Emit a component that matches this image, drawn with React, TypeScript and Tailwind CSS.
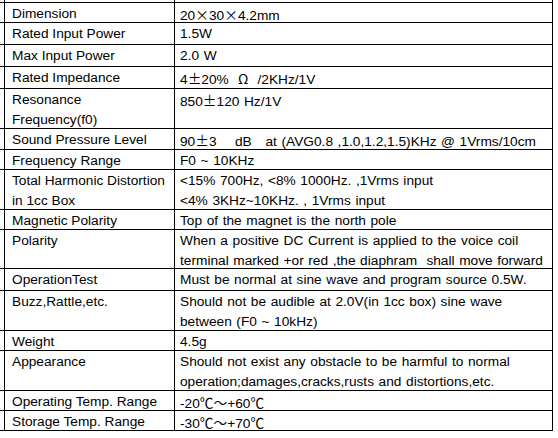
const cjk = 'font-["Noto_Sans_CJK_SC",sans-serif]';

function C({ children }: { children: string }) {
  return <span className={cjk}>{children}</span>;
}

type Row = { h: string; label: React.ReactNode; value: React.ReactNode };

const rows: Row[] = [
  {
    h: 'h-[20px]',
    label: 'Dimension',
    value: (
      <>
        20<C>×</C>30<C>×</C>4.2mm
      </>
    ),
  },
  { h: 'h-[22px]', label: 'Rated Input Power', value: '1.5W' },
  { h: 'h-[22px]', label: 'Max Input Power', value: '2.0 W' },
  {
    h: 'h-[22px]',
    label: 'Rated Impedance',
    value: (
      <>
        4<C>±</C>20%&nbsp; <C>Ω</C>&nbsp; /2KHz/1V
      </>
    ),
  },
  {
    h: 'h-[40px]',
    label: (
      <>
        Resonance
        <br />
        Frequency(f0)
      </>
    ),
    value: (
      <>
        850<C>±</C>120 Hz/1V
      </>
    ),
  },
  {
    h: 'h-[21px]',
    label: 'Sound Pressure Level',
    value: (
      <>
        90<C>±</C>3&nbsp;&nbsp;&nbsp; dB&nbsp;&nbsp; at (AVG0.8 ,1.0,1.2,1.5)KHz @ 1Vrms/10cm
      </>
    ),
  },
  { h: 'h-[20px]', label: 'Frequency Range', value: 'F0 ~ 10KHz' },
  {
    h: 'h-[40px]',
    label: (
      <>
        Total Harmonic Distortion
        <br />
        in 1cc Box
      </>
    ),
    value: (
      <>
        &lt;15% 700Hz, &lt;8% 1000Hz. ,1Vrms input
        <br />
        &lt;4% 3KHz~10KHz. , 1Vrms input
      </>
    ),
  },
  { h: 'h-[20px]', label: 'Magnetic Polarity', value: 'Top of the magnet is the north pole' },
  {
    h: 'h-[39px]',
    label: 'Polarity',
    value: (
      <>
        When a positive DC Current is applied to the voice coil
        <br />
        terminal marked +or red ,the diaphram&nbsp; shall move forward
      </>
    ),
  },
  {
    h: 'h-[22px]',
    label: 'OperationTest',
    value: 'Must be normal at sine wave and program source 0.5W.',
  },
  {
    h: 'h-[40px]',
    label: 'Buzz,Rattle,etc.',
    value: (
      <>
        Should not be audible at 2.0V(in 1cc box) sine wave
        <br />
        between (F0 ~ 10kHz)
      </>
    ),
  },
  { h: 'h-[20px]', label: 'Weight', value: '4.5g' },
  {
    h: 'h-[40px]',
    label: 'Appearance',
    value: (
      <>
        Should not exist any obstacle to be harmful to normal
        <br />
        operation;damages,cracks,rusts and distortions,etc.
      </>
    ),
  },
  {
    h: 'h-[20px]',
    label: 'Operating Temp. Range',
    value: (
      <>
        -20<C>℃～</C>+60<C>℃</C>
      </>
    ),
  },
  {
    h: 'h-[20px]',
    label: 'Storage Temp. Range',
    value: (
      <>
        -30<C>℃～</C>+70<C>℃</C>
      </>
    ),
  },
];

export default function App() {
  return (
    <div className='w-[558px] h-[438px] bg-white text-black font-["Liberation_Sans",Arial,sans-serif] text-[13.7px] leading-[20px] overflow-hidden'>
      <div className="w-[553px]">
        <div className="flex h-[2px]">
          <div className="w-[4px]" />
          <div className="w-[170px] border-l border-black" />
          <div className="w-[379px] border-x border-black" />
        </div>
        <div className="border-t border-black">
          {rows.map((r, i) => (
            <div key={i} className={`flex border-b border-black ${r.h}`}>
              <div className="w-[4px]" />
              <div className="w-[170px] border-l border-black pl-[7px] pt-[1px] whitespace-nowrap">
                {r.label}
              </div>
              <div className="w-[379px] border-x border-black pl-[5px] pt-[1px] whitespace-nowrap [word-spacing:0.8px]">
                {r.value}
              </div>
            </div>
          ))}
        </div>
      </div>
    </div>
  );
}
